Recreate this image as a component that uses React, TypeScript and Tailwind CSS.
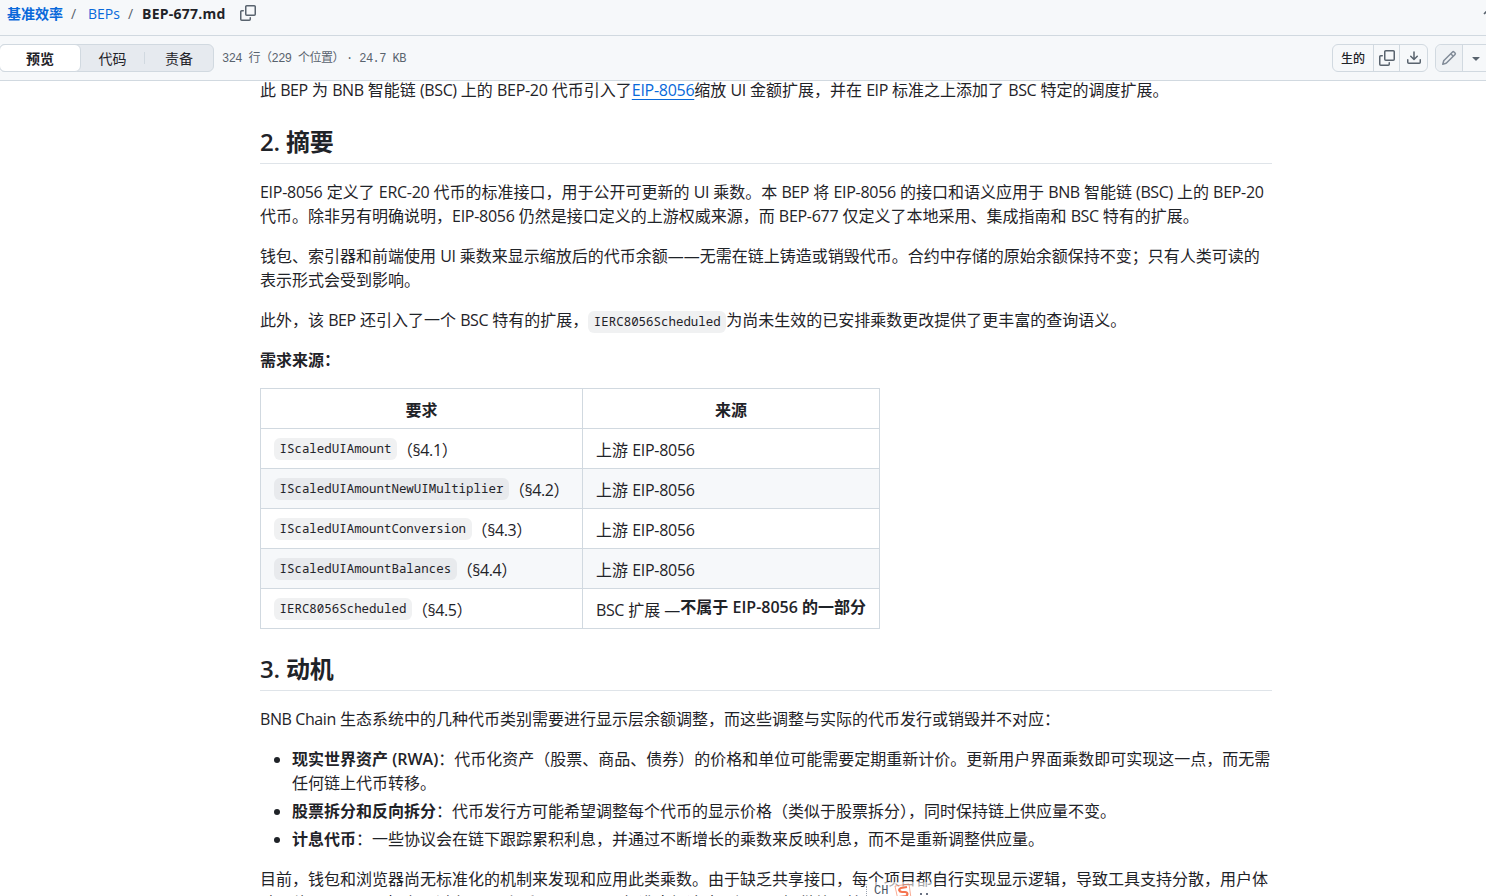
import type { ReactNode } from 'react'

type IconProps = { className?: string }

function CopyIcon({ className }: IconProps) {
  return (
    <svg viewBox="0 0 16 16" fill="currentColor" className={className}>
      <path d="M0 6.75C0 5.784.784 5 1.75 5h1.5a.75.75 0 0 1 0 1.5h-1.5a.25.25 0 0 0-.25.25v7.5c0 .138.112.25.25.25h7.5a.25.25 0 0 0 .25-.25v-1.5a.75.75 0 0 1 1.5 0v1.5A1.75 1.75 0 0 1 9.25 16h-7.5A1.75 1.75 0 0 1 0 14.25Z" />
      <path d="M5 1.75C5 .784 5.784 0 6.75 0h7.5C15.216 0 16 .784 16 1.75v7.5A1.75 1.75 0 0 1 14.25 11h-7.5A1.75 1.75 0 0 1 5 9.25Zm1.75-.25a.25.25 0 0 0-.25.25v7.5c0 .138.112.25.25.25h7.5a.25.25 0 0 0 .25-.25v-7.5a.25.25 0 0 0-.25-.25Z" />
    </svg>
  )
}

function DownloadIcon({ className }: IconProps) {
  return (
    <svg viewBox="0 0 16 16" fill="currentColor" className={className}>
      <path d="M2.75 14A1.75 1.75 0 0 1 1 12.25v-2.5a.75.75 0 0 1 1.5 0v2.5c0 .138.112.25.25.25h10.5a.25.25 0 0 0 .25-.25v-2.5a.75.75 0 0 1 1.5 0v2.5A1.75 1.75 0 0 1 13.25 14Z" />
      <path d="M7.25 7.689V2a.75.75 0 0 1 1.5 0v5.689l1.97-1.969a.749.749 0 1 1 1.06 1.06l-3.25 3.25a.749.749 0 0 1-1.06 0L4.22 6.78a.749.749 0 1 1 1.06-1.06l1.97 1.969Z" />
    </svg>
  )
}

function PencilIcon({ className }: IconProps) {
  return (
    <svg viewBox="0 0 16 16" fill="currentColor" className={className}>
      <path d="M11.013 1.427a1.75 1.75 0 0 1 2.474 0l1.086 1.086a1.75 1.75 0 0 1 0 2.474l-8.61 8.61c-.21.21-.47.364-.756.445l-3.251.93a.75.75 0 0 1-.927-.928l.929-3.25c.081-.286.235-.547.445-.758l8.61-8.61Zm.176 4.823L9.75 4.81l-6.286 6.287a.253.253 0 0 0-.064.108l-.558 1.953 1.953-.558a.253.253 0 0 0 .108-.064Zm1.238-3.763a.25.25 0 0 0-.354 0L10.811 3.75l1.439 1.44 1.263-1.263a.25.25 0 0 0 0-.354Z" />
    </svg>
  )
}

function TriangleDownIcon({ className }: IconProps) {
  return (
    <svg viewBox="0 0 16 16" fill="currentColor" className={className}>
      <path d="m4.427 7.427 3.396 3.396a.25.25 0 0 0 .354 0l3.396-3.396A.25.25 0 0 0 11.396 7H4.604a.25.25 0 0 0-.177.427Z" />
    </svg>
  )
}

// Latin runs are set a little tighter than the Chinese text around them
function Mixed({ children }: { children: string }) {
  return (
    <>
      {children.split(/([A-Za-z0-9(][A-Za-z0-9 ().-]*[A-Za-z0-9)])/).map((part, i) =>
        i % 2 ? (
          <span key={i} className={/\d/.test(part) ? 'tracking-[-0.28px]' : 'tracking-[-0.4px]'}>
            {part}
          </span>
        ) : (
          part
        )
      )}
    </>
  )
}

function Code({ children }: { children: ReactNode }) {
  return (
    <code className="inline-block h-[22px] rounded-md bg-[#818b98]/12 px-[5.5px] font-['Noto_Sans_Mono','DejaVu_Sans_Mono',monospace] text-[12.45px] leading-[22px]">
      {children}
    </code>
  )
}

function Heading({ children }: { children: ReactNode }) {
  return (
    <h2 className="mt-6 mb-4 h-[38px] border-b border-[#d1d9e0]/70 pt-px text-2xl leading-[30px] font-semibold tracking-[-0.2px]">
      {children}
    </h2>
  )
}

// Input method bar hovering over the bottom of the page
function ImeBar() {
  return (
    <div className="absolute top-[882px] left-[865px] flex h-[14px] w-[66px] overflow-hidden bg-white/60">
      <span className="mt-1 ml-px h-3 border-l border-dotted border-gray-400" />
      <span className="mt-[3px] ml-[7px] w-5 font-['Liberation_Mono',monospace] text-xs leading-3 text-gray-600">CH</span>
      <svg viewBox="0 0 18 16" className="mt-px h-4 w-[18px]" fill="none" stroke="#f5744f">
        <path d="M1 3 15 1l2 14-13 2Z" strokeWidth="1" opacity=".6" />
        <path d="M13 4 7 5c-3 1-2 4 1 4h3c3 0 3 3 1 4l-7 1" strokeWidth="2.2" />
      </svg>
      <span className="mt-[11px] ml-2 h-2 w-2 border-x-2 border-dotted border-gray-500" />
    </div>
  )
}

const rows = [
  { name: 'IScaledUIAmount', section: '（§4.1）' },
  { name: 'IScaledUIAmountNewUIMultiplier', section: '（§4.2）' },
  { name: 'IScaledUIAmountConversion', section: '（§4.3）' },
  { name: 'IScaledUIAmountBalances', section: '（§4.4）' },
  { name: 'IERC8056Scheduled', section: '（§4.5）', extension: true },
]

export default function App() {
  return (
    <div className="relative flex h-[896px] w-[1486px] flex-col overflow-hidden bg-white font-['Open_Sans','Noto_Sans_CJK_SC',sans-serif] text-[#1f2328]">
      {/* Breadcrumb */}
      <header className="flex h-9 shrink-0 items-center border-b border-[#d1d9e0] bg-[#f6f8fa] pb-2 pl-[7px] text-sm whitespace-nowrap">
        <a className="w-14 font-semibold text-[#0969da]">基准效率</a>
        <span className="w-[25px] pl-2 text-[#59636e]">/</span>
        <a className="w-8 text-[#0969da]">BEPs</a>
        <span className="w-[22px] pl-2 text-[#59636e]">/</span>
        <span className="w-[98px] font-bold tracking-[0.25px]">BEP-677.md</span>
        <CopyIcon className="-mt-px size-4 text-[#59636e]" />
        <svg viewBox="0 0 16 16" className="mr-[-11px] mb-1 ml-auto size-4 text-[#59636e]">
          <path d="M3 10l5-5 5 5" fill="none" stroke="currentColor" strokeWidth="1.6" />
        </svg>
      </header>

      {/* Toolbar */}
      <div className="flex h-[45px] shrink-0 items-center border-b border-[#d1d9e0] bg-[#f6f8fa] text-sm whitespace-nowrap">
        <div className="-ml-px flex h-7 w-[215px] items-center rounded-md border border-[#d1d9e0] bg-[#e6eaef]">
          <button className="-ml-px h-7 w-[82px] rounded-md border border-[#d1d9e0] bg-white pt-px font-semibold">预览</button>
          <button className="h-7 w-[63px] pt-px">代码</button>
          <span className="h-3 w-px bg-[#d1d9e0]" />
          <button className="h-7 flex-1 pt-px">责备</button>
        </div>
        <div className="mt-0.5 ml-2 flex font-['Liberation_Mono','Noto_Sans_CJK_SC',monospace] text-xs tracking-[-0.55px] text-[#59636e]">
          <span className="w-[124px]">324 行（229 个位置）</span>
          <span>· 24.7 KB</span>
        </div>
        <div className="ml-auto flex h-7 w-24 rounded-md border border-[#d1d9e0] bg-[#f6f8fa] text-xs">
          <button className="w-10 pt-px font-medium">生的</button>
          <button className="flex w-[27px] items-center justify-center border-x border-[#d1d9e0]">
            <CopyIcon className="size-4 text-[#59636e]" />
          </button>
          <button className="flex flex-1 items-center justify-center">
            <DownloadIcon className="size-4 text-[#59636e]" />
          </button>
        </div>
        <div className="-mr-1 ml-[7px] flex h-7 w-[55px] rounded-l-md border border-[#d1d9e0]">
          <button className="flex w-[27px] items-center justify-center rounded-l-md border-r border-[#d1d9e0] bg-[#eff2f5]">
            <PencilIcon className="size-4 text-[#818b98]" />
          </button>
          <button className="flex w-[26px] items-center justify-center">
            <TriangleDownIcon className="size-4 text-[#59636e]" />
          </button>
        </div>
      </div>

      {/* Document */}
      <article className="ml-[260px] w-[1012px] text-base leading-6 whitespace-nowrap">
        <p className="-mt-[3px]">
          <Mixed>此 BEP 为 BNB 智能链 (BSC) 上的 BEP-20 代币引入了</Mixed>
          <a className="text-[#0969da] underline underline-offset-3">
            <Mixed>EIP-8056</Mixed>
          </a>
          <Mixed>缩放 UI 金额扩展，并在 EIP 标准之上添加了 BSC 特定的调度扩展。</Mixed>
        </p>

        <Heading>2. 摘要</Heading>
        <p className="mb-4">
          <Mixed>EIP-8056 定义了 ERC-20 代币的标准接口，用于公开可更新的 UI 乘数。本 BEP 将 EIP-8056 的接口和语义应用于 BNB 智能链 (BSC) 上的 BEP-20</Mixed>
          <br />
          <Mixed>代币。除非另有明确说明，EIP-8056 仍然是接口定义的上游权威来源，而 BEP-677 仅定义了本地采用、集成指南和 BSC 特有的扩展。</Mixed>
        </p>
        <p className="mb-4">
          <Mixed>钱包、索引器和前端使用 UI 乘数来显示缩放后的代币余额——无需在链上铸造或销毁代币。合约中存储的原始余额保持不变；只有人类可读的</Mixed>
          <br />
          表示形式会受到影响。
        </p>
        <p className="mb-4 h-6">
          <Mixed>此外，该 BEP 还引入了一个 BSC 特有的扩展，</Mixed>
          <Code>IERC8056Scheduled</Code>
          为尚未生效的已安排乘数更改提供了更丰富的查询语义。
        </p>
        <p className="mb-4 font-semibold">需求来源：</p>

        <table className="w-[620px] table-fixed border-collapse">
          <thead>
            <tr className="h-10">
              <th className="w-[322px] border border-[#d1d9e0] p-0 pt-0.5 font-semibold">要求</th>
              <th className="border border-[#d1d9e0] p-0 pt-0.5 font-semibold">来源</th>
            </tr>
          </thead>
          <tbody>
            {rows.map((row) => (
              <tr key={row.name} className="h-10 even:bg-[#f6f8fa]">
                <td className="border border-[#d1d9e0] px-[13px] py-0">
                  <div className="flex items-center">
                    <Code>{row.name}</Code>
                    <span className="pt-[3px] tracking-[-0.4px]">{row.section}</span>
                  </div>
                </td>
                <td className="border border-[#d1d9e0] px-[13px] py-0">
                  <div className="flex">
                    <span className="pt-[3px]">
                      <Mixed>{row.extension ? 'BSC 扩展 —' : '上游 EIP-8056'}</Mixed>
                    </span>
                    {row.extension && (
                      <strong className="font-semibold">不属于 EIP-8056 的一部分</strong>
                    )}
                  </div>
                </td>
              </tr>
            ))}
          </tbody>
        </table>

        <Heading>3. 动机</Heading>
        <p className="mb-4">
          <Mixed>BNB Chain 生态系统中的几种代币类别需要进行显示层余额调整，而这些调整与实际的代币发行或销毁并不对应：</Mixed>
        </p>
        <ul className="mb-4 list-disc space-y-1 pl-8">
          <li>
            <strong className="font-semibold">现实世界资产 (RWA)</strong>
            ：代币化资产（股票、商品、债券）的价格和单位可能需要定期重新计价。更新用户界面乘数即可实现这一点，而无需
            <br />
            任何链上代币转移。
          </li>
          <li>
            <strong className="font-semibold">股票拆分和反向拆分</strong>
            ：代币发行方可能希望调整每个代币的显示价格（类似于股票拆分），同时保持链上供应量不变。
          </li>
          <li>
            <strong className="font-semibold">计息代币</strong>
            ：一些协议会在链下跟踪累积利息，并通过不断增长的乘数来反映利息，而不是重新调整供应量。
          </li>
        </ul>
        <p>
          目前，钱包和浏览器尚无标准化的机制来发现和应用此类乘数。由于缺乏共享接口，每个项目都自行实现显示逻辑，导致工具支持分散，用户体
          <br />
          <Mixed>验不佳。BEP-677 旨在通过在 BSC 上采用 EIP-8056 标准来解决这一问题，提供统一接口。</Mixed>
        </p>
      </article>

      <ImeBar />
    </div>
  )
}
